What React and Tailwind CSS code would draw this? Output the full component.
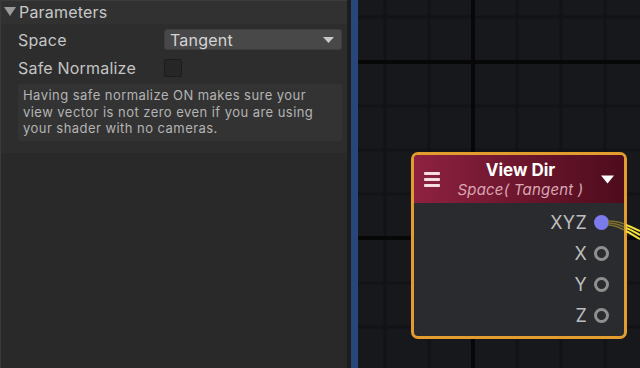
import React from 'react';

const FONT = { fontFamily: 'Inter, "Noto Sans", "Liberation Sans", sans-serif' };

/** Panneau des paramètres (à gauche). */
function ParamsPanel() {
  return (
    <div className="flex h-full w-[347px] shrink-0 flex-col border-l border-[#3a3a3a] bg-[#292929]">
      <div className="flex h-[24px] items-center border-t border-[#3c3c3c] bg-[#313131] pb-[2px] pl-[2px] text-[16px] tracking-[0.2px] text-[#c8c8c8]">
        <svg width="14" height="11" viewBox="0 0 14 11" className="mr-[2px]">
          <path d="M1 1 L13 1 L7 10 Z" fill="#9a9a9a" />
        </svg>
        Parameters
      </div>
      <div className="flex flex-col bg-[#2d2d2d] pb-[12px] pl-[17px] pr-[5px] text-[16px] tracking-[0.2px]">
        <div className="mt-[5px] flex h-[21px] items-center">
          <span className="w-[146px] text-[#c4c4c4]">Space</span>
          <div className="flex h-[21px] flex-1 items-center justify-between rounded-[3px] border border-[#3d3d3d] bg-[#484848] pl-[5px] pr-[7px] text-[#d4d4d4]">
            Tangent
            <svg width="11" height="8" viewBox="0 0 11 8">
              <path d="M0 1 L11 1 L5.5 7 Z" fill="#c8c8c8" />
            </svg>
          </div>
        </div>
        <div className="mt-[8px] flex h-[19px] items-center">
          <span className="w-[146px] text-[#c4c4c4]">Safe Normalize</span>
          <div className="h-[18px] w-[18px] rounded-[2px] border border-[#1c1c1c] bg-[#262626]" />
        </div>
        <div className="mt-[7px] rounded-[3px] bg-[#333333] px-[5px] pb-[4px] pt-[3px] text-[13px] leading-[16.5px] tracking-[0.45px] text-[#b4b4b4]">
          Having safe normalize ON makes sure your
          <br />
          view vector is not zero even if you are using
          <br />
          your shader with no cameras.
        </div>
      </div>
    </div>
  );
}

function Port({ label, active }) {
  return (
    <div className="flex h-[31px] items-center justify-end gap-[7px] pr-[15px]">
      <span className="text-[18px] tracking-[0.3px] text-[#bdbdbd]">{label}</span>
      {active ? (
        <span className="h-[15px] w-[15px] rounded-full bg-[#7b7bec]" />
      ) : (
        <span className="h-[15px] w-[15px] rounded-full border-[3px] border-[#8f8f8f] bg-[#2b2c2f]" />
      )}
    </div>
  );
}

/** Noeud « View Dir » posé sur le graphe. */
function ViewDirNode() {
  return (
    <div className="absolute left-[53px] top-[152px] flex h-[187px] w-[216px] flex-col overflow-hidden rounded-[7px] border-[3px] border-[#e29d2e] bg-[#2a2b2e]">
      <div className="flex h-[48px] shrink-0 items-center bg-gradient-to-r from-[#8e2140] to-[#4e0c1c] px-[10px]">
        <div className="flex w-[16px] flex-col gap-[3px]">
          <span className="h-[3px] rounded-[1px] bg-[#f3dde3]" />
          <span className="h-[3px] rounded-[1px] bg-[#f3dde3]" />
          <span className="h-[3px] rounded-[1px] bg-[#f3dde3]" />
        </div>
        <div className="flex flex-1 flex-col items-center leading-none">
          <span className="text-[17px] font-bold text-white">View Dir</span>
          <span className="mt-[3px] text-[15px] italic tracking-[0.2px] text-[#d9a6b4]">Space( Tangent )</span>
        </div>
        <svg width="13" height="9" viewBox="0 0 13 9">
          <path d="M0 0.5 L13 0.5 L6.5 8.5 Z" fill="#ffffff" />
        </svg>
      </div>
      <div className="flex flex-col pt-[4px]">
        <Port label="XYZ" active />
        <Port label="X" />
        <Port label="Y" />
        <Port label="Z" />
      </div>
    </div>
  );
}

function GridCanvas() {
  const minorX = [27, 71, 159, 203, 247];
  const minorY = [17, 106, 150, 194, 283, 327];
  return (
    <div className="relative h-full flex-1 overflow-hidden bg-[#17181c]">
      <svg className="absolute inset-0" width="282" height="368">
        {minorX.map((x) => (
          <line key={'x' + x} x1={x} y1="0" x2={x} y2="368" stroke="#121316" strokeWidth="3" />
        ))}
        {minorY.map((y) => (
          <line key={'y' + y} x1="0" y1={y} x2="282" y2={y} stroke="#121316" strokeWidth="3" />
        ))}
        <line x1="115" y1="0" x2="115" y2="368" stroke="#070708" strokeWidth="4" />
        <line x1="0" y1="62" x2="282" y2="62" stroke="#070708" strokeWidth="4" />
        <line x1="0" y1="238" x2="282" y2="238" stroke="#070708" strokeWidth="4" />
      </svg>
      <ViewDirNode />
      {/* fils de sortie du port XYZ */}
      <svg className="absolute inset-0" width="282" height="368">
        <g fill="none" strokeWidth="1.6">
          <path d="M250 221 C258 221 262 222 266 224" stroke="#7d6f2c" />
          <path d="M250 223 C258 223 262 225 266 227" stroke="#7d6f2c" />
          <path d="M250 225 C258 225 262 228 266 230" stroke="#7d6f2c" />
          <path d="M268 225 C274 227 278 229 282 231" stroke="#f2e23a" strokeWidth="2" />
          <path d="M268 228 C274 230 278 233 282 235" stroke="#f2e23a" strokeWidth="2" />
          <path d="M268 231 C274 234 278 237 282 239" stroke="#f2e23a" strokeWidth="2" />
        </g>
      </svg>
    </div>
  );
}

export default function App() {
  return (
    <div style={FONT} className="flex h-[368px] w-[640px] overflow-hidden bg-[#17181c]">
      <ParamsPanel />
      <div className="h-full w-[4px] shrink-0 bg-[#1d1d1d]" />
      <div className="h-full w-[7px] shrink-0 bg-[#29467a]" />
      <GridCanvas />
    </div>
  );
}
